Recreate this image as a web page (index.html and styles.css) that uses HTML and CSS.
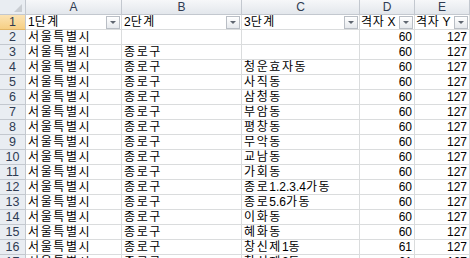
FILE: index.html
```html
<!DOCTYPE html>
<html lang="ko">
<head>
<meta charset="utf-8">
<title>Sheet</title>
<link rel="stylesheet" href="styles.css">
</head>
<body>
<div class="sheet">
  <div class="corner"><span class="corner-tri"></span></div>
  <div class="colhead">A</div>
  <div class="colhead">B</div>
  <div class="colhead">C</div>
  <div class="colhead">D</div>
  <div class="colhead">E</div>

  <div class="rowhead sel">1</div>
  <div class="cell hdr"><span><span class="d">1</span>단계</span><span class="fbtn"></span></div>
  <div class="cell hdr"><span><span class="d">2</span>단계</span><span class="fbtn"></span></div>
  <div class="cell hdr"><span><span class="d">3</span>단계</span><span class="fbtn"></span></div>
  <div class="cell hdr tight"><span>격자<span class="d"> X</span></span><span class="fbtn"></span></div>
  <div class="cell hdr tight"><span>격자<span class="d"> Y</span></span><span class="fbtn"></span></div>

  <div class="rowhead">2</div><div class="cell">서울특별시</div><div class="cell"></div><div class="cell"></div><div class="cell num">60</div><div class="cell num">127</div>
  <div class="rowhead">3</div><div class="cell">서울특별시</div><div class="cell">종로구</div><div class="cell"></div><div class="cell num">60</div><div class="cell num">127</div>
  <div class="rowhead">4</div><div class="cell">서울특별시</div><div class="cell">종로구</div><div class="cell">청운효자동</div><div class="cell num">60</div><div class="cell num">127</div>
  <div class="rowhead">5</div><div class="cell">서울특별시</div><div class="cell">종로구</div><div class="cell">사직동</div><div class="cell num">60</div><div class="cell num">127</div>
  <div class="rowhead">6</div><div class="cell">서울특별시</div><div class="cell">종로구</div><div class="cell">삼청동</div><div class="cell num">60</div><div class="cell num">127</div>
  <div class="rowhead">7</div><div class="cell">서울특별시</div><div class="cell">종로구</div><div class="cell">부암동</div><div class="cell num">60</div><div class="cell num">127</div>
  <div class="rowhead">8</div><div class="cell">서울특별시</div><div class="cell">종로구</div><div class="cell">평창동</div><div class="cell num">60</div><div class="cell num">127</div>
  <div class="rowhead">9</div><div class="cell">서울특별시</div><div class="cell">종로구</div><div class="cell">무악동</div><div class="cell num">60</div><div class="cell num">127</div>
  <div class="rowhead">10</div><div class="cell">서울특별시</div><div class="cell">종로구</div><div class="cell">교남동</div><div class="cell num">60</div><div class="cell num">127</div>
  <div class="rowhead">11</div><div class="cell">서울특별시</div><div class="cell">종로구</div><div class="cell">가회동</div><div class="cell num">60</div><div class="cell num">127</div>
  <div class="rowhead">12</div><div class="cell">서울특별시</div><div class="cell">종로구</div><div class="cell">종로<span class="d">1.2.3.4</span>가동</div><div class="cell num">60</div><div class="cell num">127</div>
  <div class="rowhead">13</div><div class="cell">서울특별시</div><div class="cell">종로구</div><div class="cell">종로<span class="d">5.6</span>가동</div><div class="cell num">60</div><div class="cell num">127</div>
  <div class="rowhead">14</div><div class="cell">서울특별시</div><div class="cell">종로구</div><div class="cell">이화동</div><div class="cell num">60</div><div class="cell num">127</div>
  <div class="rowhead">15</div><div class="cell">서울특별시</div><div class="cell">종로구</div><div class="cell">혜화동</div><div class="cell num">60</div><div class="cell num">127</div>
  <div class="rowhead">16</div><div class="cell">서울특별시</div><div class="cell">종로구</div><div class="cell">창신제<span class="d">1</span>동</div><div class="cell num">61</div><div class="cell num">127</div>
  <div class="rowhead">17</div><div class="cell">서울특별시</div><div class="cell">종로구</div><div class="cell">창신제<span class="d">2</span>동</div><div class="cell num">61</div><div class="cell num">127</div>
</div>
</body>
</html>
```

FILE: styles.css
```css
html, body {
  margin: 0;
  padding: 0;
  background: #ffffff;
  overflow: hidden;
}

body {
  width: 470px;
  height: 258px;
  font-family: "Liberation Sans", "Noto Sans CJK KR", sans-serif;
  font-size: 12px;
  color: #000000;
}

.sheet {
  display: grid;
  grid-template-columns: 26px 96px 120px 118px 55px 55px;
  grid-template-rows: repeat(18, 15px);
}

.corner,
.colhead,
.rowhead,
.cell {
  box-sizing: border-box;
  overflow: hidden;
  white-space: nowrap;
}

.corner {
  position: relative;
  background: #e9edf2;
  border-right: 1px solid #c3c8cf;
  border-bottom: 1px solid #c3c8cf;
}

.corner-tri {
  position: absolute;
  right: 3px;
  bottom: 2px;
  width: 0;
  height: 0;
  border-left: 8px solid transparent;
  border-bottom: 8px solid #c9cdd2;
}

.colhead {
  background: linear-gradient(#f6f7f9, #e3e7ec);
  border-right: 1px solid #c3c8cf;
  border-bottom: 1px solid #c3c8cf;
  color: #2f3b52;
  text-align: center;
  line-height: 14px;
  font-size: 12px;
}

.rowhead {
  background: #e9edf2;
  border-right: 1px solid #c3c8cf;
  border-bottom: 1px solid #c3c8cf;
  color: #2f3b52;
  text-align: center;
  line-height: 14px;
  font-size: 12.5px;
}

.rowhead.sel {
  background: linear-gradient(#fbe3b4, #f6cf84);
  border-bottom-color: #e1b566;
}

.cell {
  border-right: 1px solid #dadcdd;
  border-bottom: 1px solid #dadcdd;
  padding: 0 2px;
  line-height: 14px;
  letter-spacing: 1.6px;
}

.cell .d {
  letter-spacing: 0;
}

.cell.num {
  text-align: right;
  letter-spacing: 0;
}

.cell.hdr {
  display: flex;
  align-items: center;
  justify-content: space-between;
  padding-right: 1px;
}

.cell.hdr.tight {
  letter-spacing: 0.6px;
  padding-left: 1px;
}

.cell.hdr > span:first-child {
  flex: none;
}

.fbtn {
  flex: none;
  position: relative;
  box-sizing: border-box;
  width: 14px;
  height: 13px;
  border: 1px solid #b9bec5;
  background: linear-gradient(#ffffff, #e6e9ed);
}

.fbtn::after {
  content: "";
  position: absolute;
  left: 3px;
  top: 4px;
  width: 0;
  height: 0;
  border-left: 3.5px solid transparent;
  border-right: 3.5px solid transparent;
  border-top: 3.5px solid #5f6670;
}
```
